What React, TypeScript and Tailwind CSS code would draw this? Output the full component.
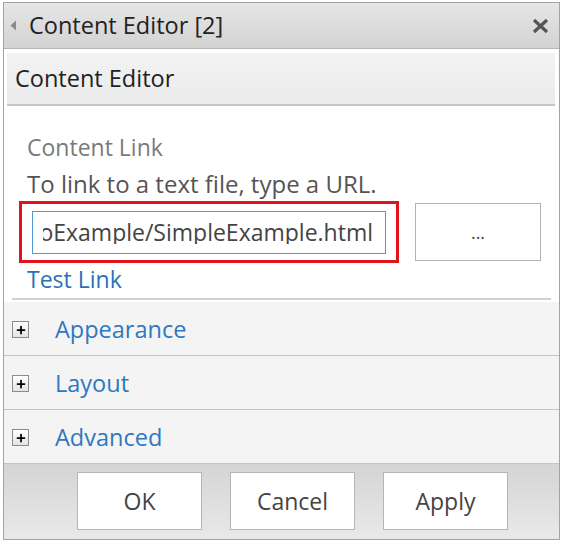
import { Plus } from 'lucide-react';

const sections = ['Appearance', 'Layout', 'Advanced'];

function PlusBox() {
  return (
    <div className="flex h-[17px] w-[17px] items-center justify-center border border-[#8c8c8c] bg-gradient-to-b from-white to-[#e4e4e4]">
      <Plus className="h-[12px] w-[12px] text-black" strokeWidth={3.5} />
    </div>
  );
}

export default function App() {
  return (
    <div className="h-[543px] w-[563px] bg-white pl-[3px] pt-[2px] font-['Open_Sans',sans-serif]">
      <div className="flex h-[538px] w-[557px] flex-col border border-[#a3a3a3]">
        {/* title bar */}
        <div className="flex h-[46px] shrink-0 items-center border-b border-[#b5b5b5] bg-gradient-to-b from-[#e6e6e6] to-[#d3d3d3] pl-[6px] pr-[10px]">
          <svg width="7" height="11" viewBox="0 0 7 11" className="mr-[12px]">
            <path d="M6 0.5 L0.5 5.5 L6 10.5 Z" fill="#8a8a8a" />
          </svg>
          <span className="text-[23.5px] leading-none text-[#222]">Content Editor [2]</span>
          <svg width="17" height="16" viewBox="0 0 17 16" className="ml-auto">
            <path d="M2 2 L15 14 M15 2 L2 14" stroke="#555" strokeWidth="3.2" />
          </svg>
        </div>

        {/* inner header */}
        <div className="px-[3px] pr-[4px] pt-[4px]">
          <div className="flex h-[53px] items-center border-b-2 border-[#c6c6c6] bg-gradient-to-b from-[#f3f3f3] to-[#ebebeb] pl-[8px]">
            <span className="text-[23.5px] leading-none text-[#222]">Content Editor</span>
          </div>
        </div>

        {/* content link */}
        <div className="flex flex-col px-[4px]">
          <div className="pl-[19px] pt-[27px] text-[23px] leading-[28px] text-[#7a7a7a]">Content Link</div>
          <div className="mt-[9px] pl-[19px] text-[24px] leading-[28px] text-[#555]">
            To link to a text file, type a URL.
          </div>
          <div className="mt-[3px] flex items-center pl-[11px]">
            <div className="h-[62px] w-[380px] border-[3px] border-[#e0141c] px-[10px] py-[7px]">
              <div className="flex h-[43px] items-center border border-[#4d9ad6] pl-[10px] pr-[12px]">
                <div className="flex min-w-0 flex-1 justify-end overflow-hidden whitespace-nowrap text-[23px] leading-none text-[#444]">
                  DemoExample/SimpleExample.html
                </div>
              </div>
            </div>
            <div className="ml-[16px] flex h-[58px] w-[126px] items-center justify-center border border-[#b3b3b3] bg-white text-[18px] leading-none text-[#444]">
              ...
            </div>
          </div>
          <div className="mt-[2px] pl-[19px] text-[23px] leading-[28px] text-[#2a72b8]">Test Link</div>
          <div className="mx-[4px] mt-[5px] h-[2px] bg-[#d2d2d2]" />
        </div>

        {/* collapsed sections */}
        <div className="mt-[2px] flex flex-col">
          {sections.map((s) => (
            <div
              key={s}
              className="flex h-[54px] items-center border-b border-[#c4c4c4] bg-[#f4f4f4] pl-[8px] pt-[2px]"
            >
              <PlusBox />
              <span className="ml-[26px] text-[23.5px] leading-none text-[#2e78c2]">{s}</span>
            </div>
          ))}
        </div>

        {/* footer */}
        <div className="flex flex-1 items-start gap-[28px] bg-gradient-to-b from-[#d4d4d4] to-[#e9e9e9] pl-[73px] pt-[8px]">
          {['OK', 'Cancel', 'Apply'].map((b) => (
            <div
              key={b}
              className="flex h-[58px] w-[125px] items-center justify-center border border-[#b5b5b5] bg-white text-[23px] leading-none text-[#444]"
            >
              {b}
            </div>
          ))}
        </div>
      </div>
    </div>
  );
}
